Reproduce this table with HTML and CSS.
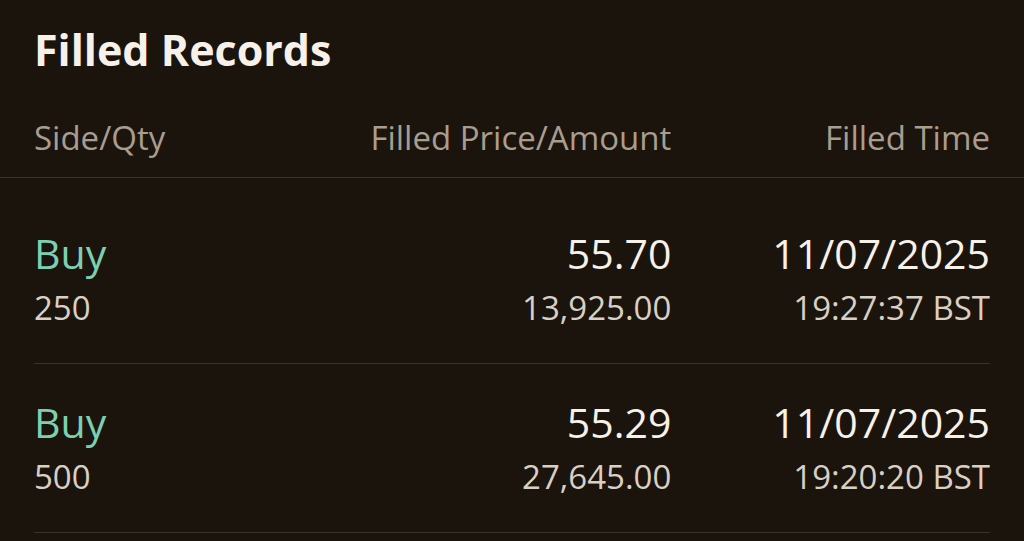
FILE: index.html
```html
<!DOCTYPE html>
<html>
<head>
<meta charset="utf-8">
<link rel="stylesheet" href="styles.css">
</head>
<body>
<div class="page">
  <h1 class="title">Filled Records</h1>
  <div class="head">
    <div class="head-inner">
      <span class="c1">Side/Qty</span>
      <span class="c2">Filled Price/Amount</span>
      <span class="c3">Filled Time</span>
    </div>
  </div>
  <div class="list">
    <div class="row">
      <div class="c1"><div class="main buy">Buy</div><div class="sub">250</div></div>
      <div class="c2"><div class="main">55.70</div><div class="sub">13,925.00</div></div>
      <div class="c3"><div class="main">11/07/2025</div><div class="sub">19:27:37 BST</div></div>
    </div>
    <div class="row">
      <div class="c1"><div class="main buy">Buy</div><div class="sub">500</div></div>
      <div class="c2"><div class="main">55.29</div><div class="sub">27,645.00</div></div>
      <div class="c3"><div class="main">11/07/2025</div><div class="sub">19:20:20 BST</div></div>
    </div>
  </div>
</div>
</body>
</html>
```
FILE: styles.css
```css
html, body {
  margin: 0;
  padding: 0;
  background: #1a140d;
  font-family: "Open Sans", "Noto Sans", sans-serif;
  overflow: hidden;
}
.page {
  width: 1024px;
  height: 541px;
}
.title {
  margin: 0;
  padding: 20px 34px 0;
  font-size: 43px;
  font-weight: 700;
  line-height: 60px;
  color: #f7f1ea;
}
.head {
  border-bottom: 1px solid #3a322a;
}
.head-inner {
  display: grid;
  grid-template-columns: 1fr 1fr 1fr;
  padding: 35px 34px 17px;
  font-size: 33px;
  line-height: 45px;
  color: #a99d8f;
}
.list {
  padding: 17px 34px 0;
}
.row {
  display: grid;
  grid-template-columns: 1fr 1fr 1fr;
  box-sizing: border-box;
  height: 169px;
  padding-top: 30px;
  border-bottom: 1px solid #3a322a;
  align-content: start;
}
.c2, .c3 { text-align: right; }
.c1 { text-align: left; }
.main {
  font-size: 41px;
  line-height: 56px;
  color: #f7f1ea;
}
.main.buy { color: #7dcfb1; }
.sub {
  font-size: 33px;
  line-height: 53px;
  color: #d9d0c5;
}
```
